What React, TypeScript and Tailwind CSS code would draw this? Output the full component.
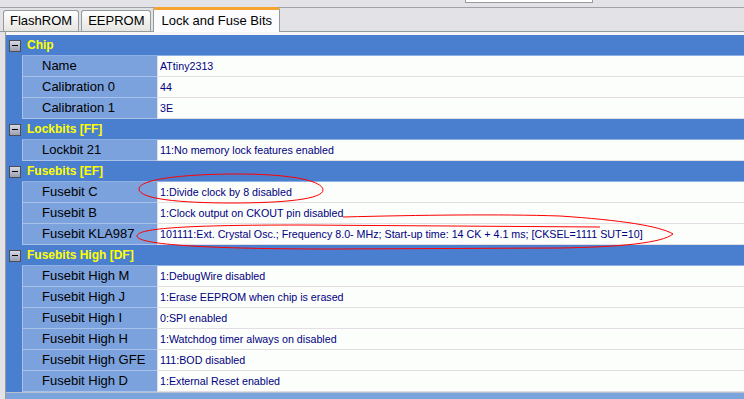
import React from "react";

type Item = { name: string; value: string };
type Group = { title: string; items: Item[] };

const groups: Group[] = [
  {
    title: "Chip",
    items: [
      { name: "Name", value: "ATtiny2313" },
      { name: "Calibration 0", value: "44" },
      { name: "Calibration 1", value: "3E" },
    ],
  },
  {
    title: "Lockbits [FF]",
    items: [{ name: "Lockbit 21", value: "11:No memory lock features enabled" }],
  },
  {
    title: "Fusebits [EF]",
    items: [
      { name: "Fusebit C", value: "1:Divide clock by 8 disabled" },
      { name: "Fusebit B", value: "1:Clock output on CKOUT pin disabled" },
      {
        name: "Fusebit KLA987",
        value:
          "101111:Ext. Crystal Osc.; Frequency 8.0- MHz; Start-up time: 14 CK + 4.1 ms; [CKSEL=1111 SUT=10]",
      },
    ],
  },
  {
    title: "Fusebits High [DF]",
    items: [
      { name: "Fusebit High M", value: "1:DebugWire disabled" },
      { name: "Fusebit High J", value: "1:Erase EEPROM when chip is erased" },
      { name: "Fusebit High I", value: "0:SPI enabled" },
      { name: "Fusebit High H", value: "1:Watchdog timer always on disabled" },
      { name: "Fusebit High GFE", value: "111:BOD disabled" },
      { name: "Fusebit High D", value: "1:External Reset enabled" },
    ],
  },
];

function Tab({ label, active }: { label: string; active?: boolean }) {
  if (active) {
    return (
      <div className="self-end -mb-px h-[25px] px-[7px] flex items-center bg-[#fcfcfe] border-x border-[#919b9c] rounded-t-[3px] border-t-[3px] border-t-[#f5a430] text-[13px] text-black">
        {label}
      </div>
    );
  }
  return (
    <div className="self-end h-[21px] px-[6px] flex items-center bg-gradient-to-b from-white to-[#e6e5e0] border-x border-t border-[#919b9c] rounded-t-[3px] text-[13px] text-black">
      {label}
    </div>
  );
}

function Header({ title }: { title: string }) {
  return (
    <div className="flex h-[21px] bg-[#4a7fd0]">
      <div className="w-[16px] flex items-center pl-[3px]">
        <div className="w-[12px] h-[12px] border border-[#4d4d55] bg-gradient-to-b from-[#d8dae2] to-[#9c9fae] flex items-center justify-center">
          <div className="w-[6px] h-px bg-black" />
        </div>
      </div>
      <div className="flex-1 flex items-center pl-[5px] border-b border-[#8fb0e4] text-[12px] font-bold text-[#ffff00]">
        {title}
      </div>
    </div>
  );
}

function Row({ name, value }: Item) {
  return (
    <div className="flex h-[21px]">
      <div className="w-[16px] bg-[#4a7fd0]" />
      <div className="w-[135px] flex items-center pl-[19px] bg-[#7ba2dd] border-l border-b border-[#a8c2ea] text-[13px] text-black whitespace-nowrap">
        {name}
      </div>
      <div className="flex-1 flex items-center pl-[2px] bg-[#fcfefc] border-l border-b border-[#e4dde4] text-[10.7px] text-[#000080] whitespace-nowrap">
        {value}
      </div>
    </div>
  );
}

export default function App() {
  return (
    <div className="relative w-[744px] h-[399px] overflow-hidden bg-[#e3e2e7] font-['Liberation_Sans',Arial,sans-serif]">
      {/* top strip with cut-off input */}
      <div className="h-[7px]">
        <div className="ml-[465px] w-[128px] h-[3px] bg-white border-x border-b border-[#9a9aa0]" />
      </div>
      <div className="h-px bg-[#a0a0a8]" />

      {/* tabs */}
      <div className="h-[24px] flex gap-[2px] pl-[3px] border-b border-[#919b9c]">
        <Tab label="FlashROM" />
        <Tab label="EEPROM" />
        <Tab label="Lock and Fuse Bits" active />
      </div>

      {/* property grid */}
      <div className="flex">
        <div className="w-[5px]" />
        <div className="flex-1 border-l border-[#9a9aa4]">
          <div className="h-[3px] bg-[#f6f6f8]" />
          {groups.map((g) => (
            <div key={g.title}>
              <Header title={g.title} />
              {g.items.map((it) => (
                <Row key={it.name} {...it} />
              ))}
            </div>
          ))}
          <div className="h-px bg-[#b8c0d0]" />
          <div className="h-[8px] bg-[#7ba4dc]" />
        </div>
      </div>

      {/* hand-drawn red marks */}
      <svg className="absolute inset-0 pointer-events-none" width="744" height="399" viewBox="0 0 744 399" fill="none">
        <path
          d="M139 189 C139 179 185 174 238 174 C292 174 323 181 323 190 C323 199 285 203 232 203 C180 203 139 199 139 189 Z"
          stroke="#ff0000"
          strokeWidth="1"
        />
        <path
          d="M343 217 C420 215 500 214 560 216 C620 220 660 226 673 234 C662 243 620 247 560 248 L330 249 C230 249 137 246 137 236 C137 228 190 225 300 225 L600 227"
          stroke="#ff0000"
          strokeWidth="1"
        />
      </svg>
    </div>
  );
}
